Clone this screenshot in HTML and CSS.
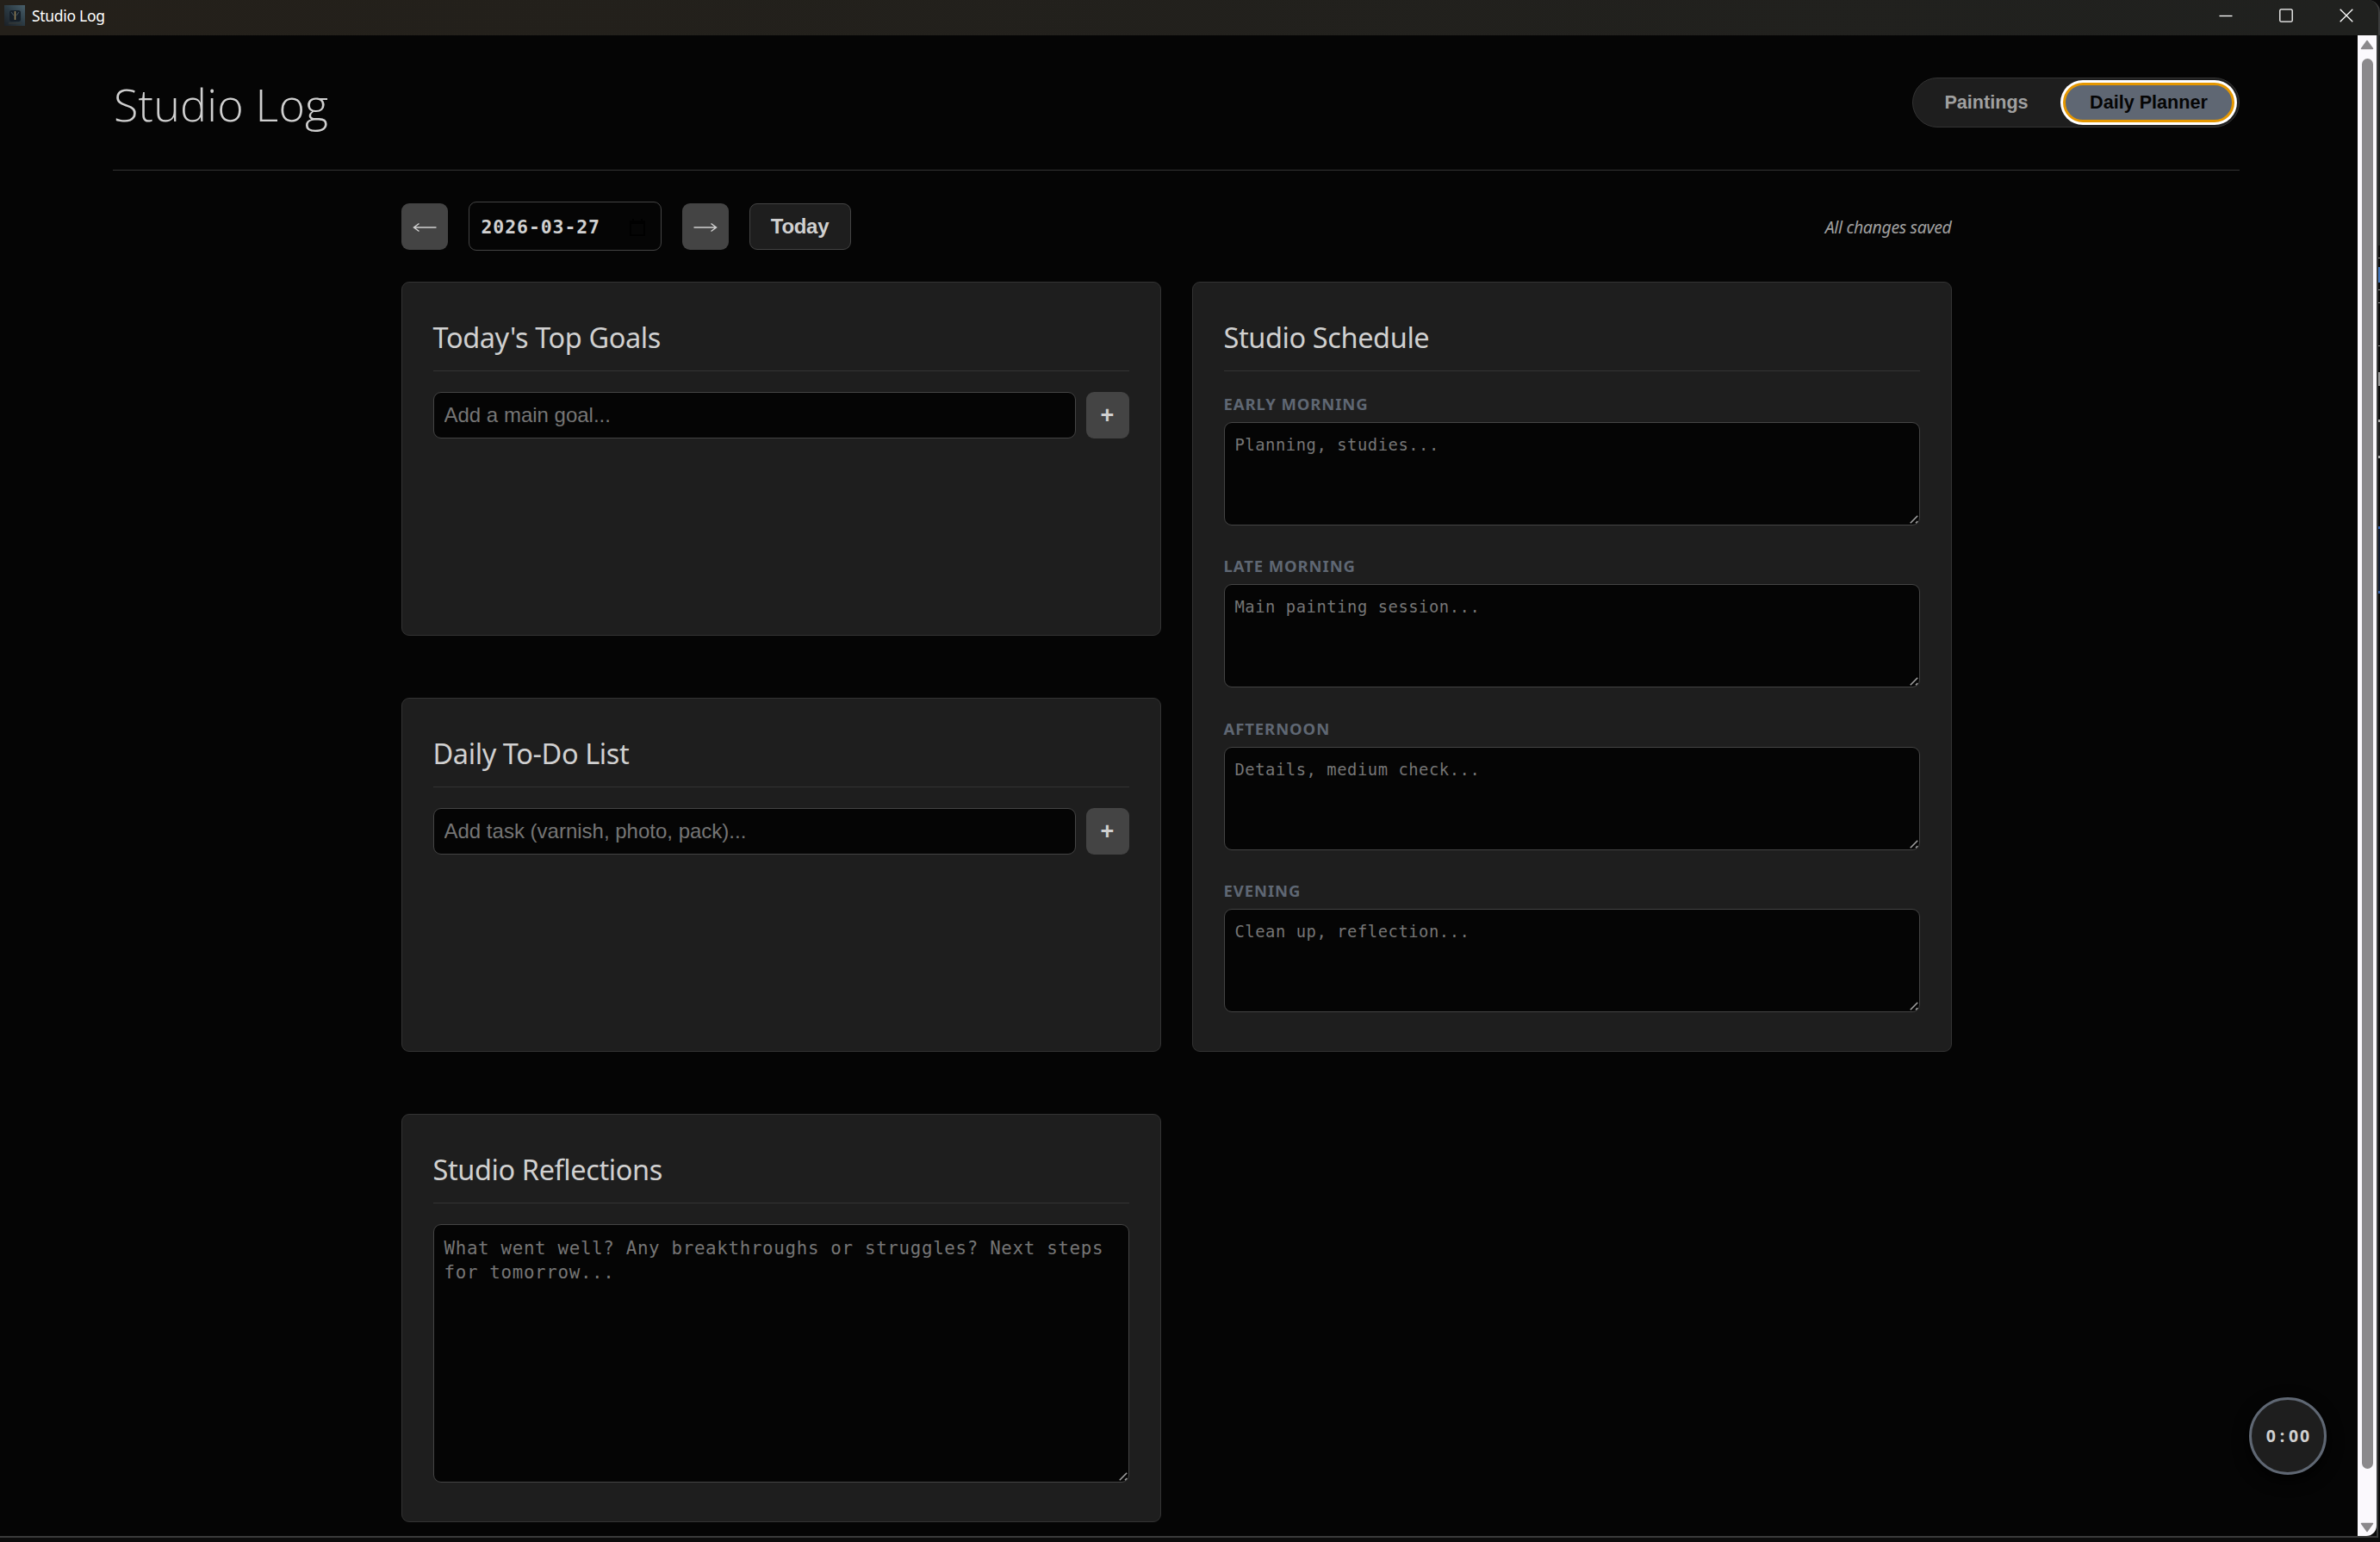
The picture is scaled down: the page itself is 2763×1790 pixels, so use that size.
FILE: index.html
```html
<!DOCTYPE html>
<html lang="en">
<head>
    <meta charset="UTF-8">
    <meta name="viewport" content="width=device-width, initial-scale=1.0">
    <title>Studio Log</title>
    <link rel="stylesheet" href="styles.css">
</head>
<body>

    <!-- Window title bar -->
    <div class="titlebar">
        <svg class="app-icon" viewBox="0 0 24 24">
            <defs>
                <linearGradient id="icon-bg" x1="1" y1="0" x2="0" y2="1">
                    <stop offset="0" stop-color="#49606b"/>
                    <stop offset="0.5" stop-color="#2b3a43"/>
                    <stop offset="1" stop-color="#1b2026"/>
                </linearGradient>
            </defs>
            <rect width="24" height="24" fill="url(#icon-bg)"/>
            <rect x="6" y="6" width="13" height="13" rx="2.5" fill="#151e27"/>
            <path d="M8 8l3 4M17 8l-3 4" stroke="#3d4c57" stroke-width="1.2"/>
            <path d="M12.5 7v10" stroke="#a08a5c" stroke-width="1.4"/>
            <path d="M5 21h15" stroke="#393a36" stroke-width="1"/>
        </svg>
        <span class="titlebar-text">Studio Log</span>
        <div class="window-controls">
            <svg viewBox="0 0 16 16"><path d="M0.5 8.5h15"/></svg>
            <svg viewBox="0 0 16 16"><rect x="0.8" y="0.8" width="14.4" height="14.4" rx="1.5"/></svg>
            <svg viewBox="0 0 16 16"><path d="M0.7 0.7l14.6 14.6M15.3 0.7L0.7 15.3"/></svg>
        </div>
    </div>

    <div class="window-body">
        <div class="app">
            <header class="app-header">
                <h1>Studio Log</h1>
                <div class="view-toggle">
                    <button class="toggle-btn">Paintings</button>
                    <button class="toggle-btn active">Daily Planner</button>
                </div>
            </header>

            <main class="planner">
                <!-- Date navigation -->
                <div class="date-nav">
                    <button class="arrow-btn">
                        <svg viewBox="0 0 28 12"><path d="M27.5 6H1.5M7.5 1.5L1.5 6l6 4.5"/></svg>
                    </button>
                    <div class="date-field">
                        <input type="text" class="date-input" value="2026-03-27">
                        <svg class="calendar-icon" viewBox="0 0 20 22"><path d="M2 4h16v16H2zM2 6h16M5 1v3M15 1v3"/></svg>
                    </div>
                    <button class="arrow-btn">
                        <svg viewBox="0 0 28 12"><path d="M0.5 6h26M20.5 1.5l6 4.5-6 4.5"/></svg>
                    </button>
                    <button class="today-btn">Today</button>
                    <span class="save-status">All changes saved</span>
                </div>

                <div class="planner-grid">
                    <div class="planner-column">
                        <section class="card list-card">
                            <h2>Today's Top Goals</h2>
                            <div class="add-row">
                                <input type="text" placeholder="Add a main goal...">
                                <button class="add-btn">+</button>
                            </div>
                        </section>

                        <section class="card list-card">
                            <h2>Daily To-Do List</h2>
                            <div class="add-row">
                                <input type="text" placeholder="Add task (varnish, photo, pack)...">
                                <button class="add-btn">+</button>
                            </div>
                        </section>

                        <section class="card reflection-card">
                            <h2>Studio Reflections</h2>
                            <div class="text-field">
                                <textarea class="reflection" placeholder="What went well? Any breakthroughs or struggles? Next steps for tomorrow..."></textarea>
                                <svg class="grip" viewBox="0 0 10 10"><path d="M0.8 9.2L9.2 0.8M7 9.2l2.2-2.2"/></svg>
                            </div>
                        </section>
                    </div>

                    <div class="planner-column">
                        <section class="card schedule-card">
                            <h2>Studio Schedule</h2>
                            <div class="time-block">
                                <label>Early Morning</label>
                                <div class="text-field">
                                    <textarea placeholder="Planning, studies..."></textarea>
                                    <svg class="grip" viewBox="0 0 10 10"><path d="M0.8 9.2L9.2 0.8M7 9.2l2.2-2.2"/></svg>
                                </div>
                            </div>
                            <div class="time-block">
                                <label>Late Morning</label>
                                <div class="text-field">
                                    <textarea placeholder="Main painting session..."></textarea>
                                    <svg class="grip" viewBox="0 0 10 10"><path d="M0.8 9.2L9.2 0.8M7 9.2l2.2-2.2"/></svg>
                                </div>
                            </div>
                            <div class="time-block">
                                <label>Afternoon</label>
                                <div class="text-field">
                                    <textarea placeholder="Details, medium check..."></textarea>
                                    <svg class="grip" viewBox="0 0 10 10"><path d="M0.8 9.2L9.2 0.8M7 9.2l2.2-2.2"/></svg>
                                </div>
                            </div>
                            <div class="time-block">
                                <label>Evening</label>
                                <div class="text-field">
                                    <textarea placeholder="Clean up, reflection..."></textarea>
                                    <svg class="grip" viewBox="0 0 10 10"><path d="M0.8 9.2L9.2 0.8M7 9.2l2.2-2.2"/></svg>
                                </div>
                            </div>
                        </section>
                    </div>
                </div>
            </main>

            <!-- Floating timer -->
            <div class="timer">0<span class="colon">:</span>00</div>
        </div>

        <div class="scrollbar">
            <svg viewBox="0 0 16 12"><path d="M8 1.5L14.5 10.5H1.5z"/></svg>
            <div class="scroll-thumb"></div>
            <svg viewBox="0 0 16 12"><path d="M8 10.5L1.5 1.5h13z"/></svg>
        </div>
        <div class="desktop-edge"></div>
    </div>
    <div class="window-bottom"></div>

</body>
</html>
```
FILE: styles.css
```css
* {
    margin: 0;
    padding: 0;
    box-sizing: border-box;
}

/* Theme colors */
:root {
    --bg: #050505;
    --card: #1e1e1e;
    --border: #333333;
    --field-border: #444444;
    --text: #d0d0d0;
    --muted: #a0a0a0;
    --accent: #5f6773;
    --mono: "DejaVu Sans Mono", monospace;
}

body {
    display: flex;
    flex-direction: column;
    height: 1790px;
    overflow: hidden;
    font-family: "Noto Sans", sans-serif;
    background-color: #0c0c0c;
    color: var(--text);
}

button,
input {
    font-family: "Liberation Sans", Arial, sans-serif;
}

/* Title bar */
.titlebar {
    display: flex;
    align-items: flex-start;
    height: 41px;
    padding: 6px 29px 0 5px;
    background: linear-gradient(to right, #24201a, #20211f);
    border-right: 2px solid #3a3b3b;
    border-top-right-radius: 14px;
}

.app-icon {
    width: 24px;
    height: 24px;
}

.titlebar-text {
    margin-left: 8px;
    font-size: 17.5px;
    line-height: 24px;
    letter-spacing: -0.3px;
    color: #ffffff;
}

.window-controls {
    display: flex;
    gap: 54px;
    margin: 4px 0 0 auto;
}

.window-controls svg {
    width: 16px;
    height: 16px;
    fill: none;
    stroke: #ffffff;
    stroke-width: 1.3;
}

.window-body {
    display: flex;
    height: 1742px;
}

.app {
    position: relative;
    flex: 1;
    padding: 0 137px 0 131px;
    background-color: var(--bg);
}

/* Header */
.app-header {
    display: flex;
    justify-content: space-between;
    align-items: flex-start;
    height: 157px;
    padding-top: 49px;
    border-bottom: 1px solid var(--border);
}

.app-header h1 {
    padding-left: 1px;
    font-family: "Open Sans", sans-serif;
    font-size: 52px;
    font-weight: 300;
    line-height: 62px;
    letter-spacing: 0.2px;
}

.view-toggle {
    display: flex;
    height: 58px;
    padding: 5px;
    background-color: var(--card);
    border: 1px solid var(--border);
    border-radius: 29px;
}

.toggle-btn {
    width: 160px;
    margin-right: 9px;
    border: none;
    border-radius: 23px;
    background: none;
    font-size: 21.6px;
    font-weight: bold;
    color: var(--muted);
}

.toggle-btn.active {
    width: 199px;
    margin-right: 0;
    background-color: var(--accent);
    border: 3px solid #e59700;
    box-shadow: 0 0 0 3px #ffffff;
    color: #050505;
}

/* Planner */
.planner {
    width: 1800px;
    margin: 0 auto;
    padding-top: 36px;
}

.date-nav {
    display: flex;
    align-items: center;
    gap: 24px;
    height: 57px;
    margin-bottom: 36px;
}

.arrow-btn {
    display: flex;
    align-items: center;
    justify-content: center;
    width: 54px;
    height: 54px;
    padding-top: 2px;
    background-color: #444444;
    border: none;
    border-radius: 9px;
}

.arrow-btn svg {
    width: 28px;
    height: 12px;
    fill: none;
    stroke: var(--text);
    stroke-width: 1.5;
}

.date-field {
    display: flex;
    align-items: center;
    width: 224px;
    height: 57px;
    padding: 2px 18px 0 14px;
    border: 1px solid var(--field-border);
    border-radius: 9px;
}

.date-input {
    width: 171px;
    background: none;
    border: none;
    font-family: var(--mono);
    font-size: 21.5px;
    font-weight: bold;
    letter-spacing: 0.9px;
    color: var(--text);
}

.calendar-icon {
    width: 20px;
    height: 22px;
    flex-shrink: 0;
    fill: none;
    stroke: #000000;
    stroke-width: 2;
}

.today-btn {
    width: 118px;
    height: 54px;
    background-color: var(--card);
    border: 1px solid var(--field-border);
    border-radius: 9px;
    font-size: 24px;
    font-weight: bold;
    letter-spacing: -0.3px;
    color: var(--text);
}

.save-status {
    margin-left: auto;
    padding-top: 2px;
    font-size: 19.5px;
    font-style: italic;
    letter-spacing: -0.35px;
    color: var(--muted);
}

.planner-grid {
    display: grid;
    grid-template-columns: 1fr 1fr;
    gap: 36px;
}

.planner-column {
    display: flex;
    flex-direction: column;
    gap: 72px;
}

/* Cards */
.card {
    padding: 36px;
    background-color: var(--card);
    border: 1px solid var(--border);
    border-radius: 9px;
}

.list-card {
    height: 411px;
}

.schedule-card {
    height: 894px;
}

.reflection-card {
    height: 474px;
}

.card h2 {
    height: 67px;
    margin-bottom: 24px;
    border-bottom: 1px solid var(--border);
    font-size: 32.5px;
    font-weight: 400;
    line-height: 55px;
    letter-spacing: -0.4px;
}

.add-row {
    display: flex;
    gap: 12px;
}

.add-row input {
    flex: 1;
    height: 54px;
    padding: 0 12px;
    background-color: var(--bg);
    border: 1px solid var(--field-border);
    border-radius: 9px;
    font-size: 24px;
}

.add-btn {
    width: 50px;
    height: 54px;
    background-color: #444444;
    border: none;
    border-radius: 9px;
    font-size: 27px;
    font-weight: bold;
    color: var(--text);
}

/* Text areas */
.text-field {
    position: relative;
}

textarea {
    display: block;
    width: 100%;
    height: 120px;
    padding: 13px 12px 12px;
    background-color: var(--bg);
    border: 1px solid var(--field-border);
    border-radius: 9px;
    font-family: var(--mono);
    font-size: 18.8px;
    line-height: 25px;
    letter-spacing: 0.56px;
    resize: none;
}

textarea.reflection {
    height: 300px;
    font-size: 20.8px;
    line-height: 28px;
    letter-spacing: 0.68px;
}

::placeholder {
    color: #757575;
}

.grip {
    position: absolute;
    right: 2px;
    bottom: 2px;
    width: 10px;
    height: 10px;
    fill: none;
    stroke: #a0a0a0;
    stroke-width: 1.6;
}

.time-block {
    margin-bottom: 33.3px;
}

.time-block label {
    display: block;
    height: 35px;
    padding-top: 1px;
    font-size: 18.5px;
    font-weight: bold;
    line-height: 26px;
    letter-spacing: 0.9px;
    text-transform: uppercase;
    color: var(--accent);
}

/* Timer */
.timer {
    position: absolute;
    right: 36px;
    bottom: 71px;
    display: flex;
    align-items: center;
    justify-content: center;
    width: 90px;
    height: 90px;
    padding: 0 0 2px 2px;
    background-color: var(--card);
    border: 3px solid var(--accent);
    border-radius: 50%;
    box-shadow: 0 6px 18px #000000;
    font-size: 19.5px;
    font-weight: bold;
    letter-spacing: 2px;
}

.timer .colon {
    width: 13px;
    text-align: center;
}

/* Scrollbar */
.scrollbar {
    display: flex;
    flex-direction: column;
    align-items: center;
    width: 22px;
    padding: 5px 0 4px;
    background-color: #fbf9fd;
    border-bottom-right-radius: 12px;
}

.scrollbar svg {
    width: 16px;
    height: 12px;
    fill: #8b898c;
    stroke: #8b898c;
    stroke-width: 1.5;
    stroke-linejoin: round;
}

.scroll-thumb {
    width: 13px;
    height: 1637px;
    margin: 10px 0 auto;
    background-color: #8b898c;
    border-radius: 7px;
}

/* Window border with the desktop showing past it */
.desktop-edge {
    width: 4px;
    border-left: 2px solid #3a3b3b;
    background: linear-gradient(to bottom,
        #202322 0 244px, #0a0a0a 244px 258px,
        #9a9a9a 258px 259px, #0a0a0a 259px 269px,
        #3f74bd 269px 287px, #0a0a0a 287px 295px,
        #9a9a9a 295px 296px, #0a0a0a 296px 310px,
        #9a9a9a 310px 311px, #0a0a0a 311px 360px,
        #9a9a9a 360px 361px, #0a0a0a 361px 391px,
        #9a9a9a 391px 407px, #0a0a0a 407px 446px,
        #b0b0b0 446px 449px, #1e1e1e 449px 488px,
        #b0b0b0 488px 491px, #0a0a0a 491px 570px,
        #2f5fb0 570px 573px, #101a2e 573px 645px,
        #2f5fb0 645px 648px, #0a0a0a 648px);
}

.window-bottom {
    width: 2761px;
    height: 7px;
    border-top: 2px solid #3a3b3b;
}
```
